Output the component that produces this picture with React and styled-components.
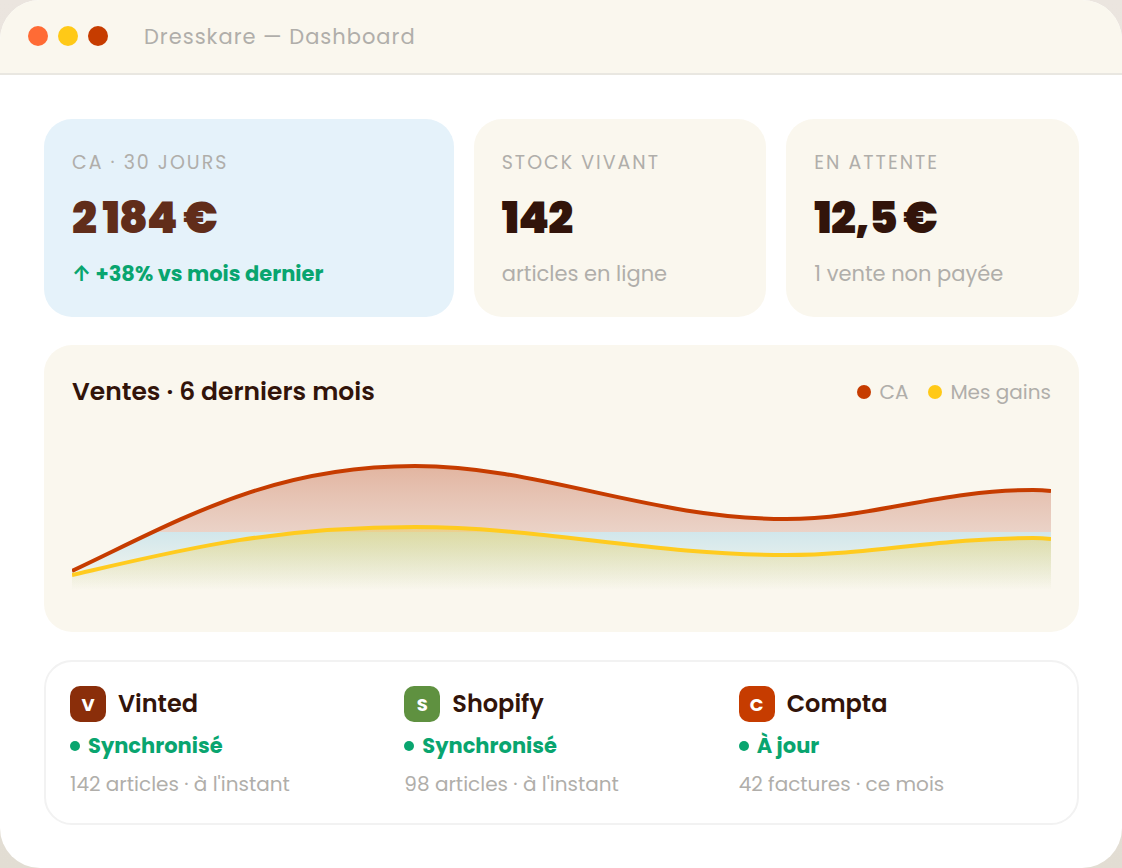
import React from 'react';
import styled, { createGlobalStyle } from 'styled-components';

const GlobalStyle = createGlobalStyle`
  * {
    box-sizing: border-box;
  }

  body {
    margin: 0;
    background: linear-gradient(#ebe5df, #e2ddd3);
    font-family: Poppins, Inter, 'Open Sans', sans-serif;
    color: #32140a;
  }

  h1, h2, h3, p, ul {
    margin: 0;
    padding: 0;
    font-weight: 400;
  }
`;

const Window = styled.div`
  min-height: 100vh;
  background-color: #fff;
  border-radius: 40px;
  overflow: hidden;
`;

const TitleBar = styled.header`
  display: flex;
  align-items: center;
  height: 75px;
  padding: 0 28px 2px;
  background-color: #faf7ee;
  border-bottom: 2px solid #e9e7e1;
`;

const Lights = styled.div`
  display: flex;
  gap: 10px;
  margin-right: 36px;
`;

const Dot = styled.span`
  flex: none;
  width: ${props => props.$size}px;
  height: ${props => props.$size}px;
  border-radius: 50%;
  background-color: ${props => props.$color};
`;

const WindowTitle = styled.h1`
  padding-top: 2px;
  color: #b0aeaa;
  font-size: 21px;
  line-height: 32px;
  letter-spacing: 1px;
`;

const Content = styled.main`
  display: flex;
  flex-direction: column;
  gap: 28px;
  padding: 44px 43px 42px 44px;
`;

const Stats = styled.section`
  display: grid;
  grid-template-columns: 1.4fr 1fr 1fr;
  gap: 20px;
`;

const StatCard = styled.div`
  padding: 29px 28px 27px;
  border-radius: 28px;
  background-color: ${props => (props.$accent ? '#e5f2fa' : '#faf7ee')};
`;

const StatLabel = styled.h2`
  color: #b0aeaa;
  font-size: 19px;
  line-height: 30px;
  letter-spacing: 2px;
  text-transform: uppercase;
`;

const StatValue = styled.p`
  margin: 14px 0;
  color: ${props => (props.$accent ? '#612d1a' : '#32140a')};
  font-size: 44px;
  font-weight: 900;
  line-height: 52px;
  letter-spacing: -1px;
  white-space: nowrap;
`;

const StatNote = styled.p`
  color: ${props => (props.$up ? '#09a56f' : '#b0aeaa')};
  font-size: 21px;
  font-weight: ${props => (props.$up ? 700 : 400)};
  line-height: 32px;
  white-space: nowrap;
`;

const ChartCard = styled.section`
  padding: 29px 28px 28px;
  border-radius: 28px;
  background-color: #faf7ee;
`;

const ChartHeader = styled.div`
  display: flex;
  align-items: center;
  justify-content: space-between;
  height: 36px;
  margin-bottom: 14px;
`;

const ChartTitle = styled.h2`
  font-size: 25px;
  font-weight: 600;
  line-height: 36px;
`;

const Legend = styled.ul`
  display: flex;
  gap: 20px;
  list-style: none;
`;

const LegendItem = styled.li`
  display: flex;
  align-items: center;
  gap: 8px;
  color: #b0aeaa;
  font-size: 20px;
  line-height: 30px;
`;

const Chart = styled.svg`
  display: block;
  width: 100%;
  height: 180px;
`;

const Channels = styled.section`
  display: grid;
  grid-template-columns: repeat(3, 1fr);
  gap: 20px;
  padding: 24px 24px 23px;
  border: 2px solid #f2f2f2;
  border-radius: 28px;
`;

const ChannelHead = styled.div`
  display: flex;
  align-items: center;
  gap: 12px;
`;

const Badge = styled.span`
  display: flex;
  align-items: center;
  justify-content: center;
  width: 36px;
  height: 36px;
  border-radius: 10px;
  background-color: ${props => props.$color};
  color: #fff;
  font-size: 18px;
  font-weight: 700;
`;

const ChannelName = styled.h3`
  font-size: 24px;
  font-weight: 600;
  line-height: 36px;
`;

const Status = styled.p`
  display: flex;
  align-items: center;
  gap: 8px;
  margin: 8px 0 6px;
  color: #09a56f;
  font-size: 21px;
  font-weight: 700;
  line-height: 32px;
`;

const Detail = styled.p`
  color: #b0aeaa;
  font-size: 20px;
  line-height: 32px;
`;

const stats = [
  { label: 'CA · 30 jours', value: '2\u00a0184\u00a0€', note: '↑ +38% vs mois dernier', accent: true },
  { label: 'Stock vivant', value: '142', note: 'articles en ligne' },
  { label: 'En attente', value: '12,5\u00a0€', note: '1 vente non payée' }
];

const channels = [
  { name: 'Vinted', color: '#8a2e0a', status: 'Synchronisé', detail: "142 articles · à l'instant" },
  { name: 'Shopify', color: '#5f9140', status: 'Synchronisé', detail: "98 articles · à l'instant" },
  { name: 'Compta', color: '#c63c00', status: 'À jour', detail: '42 factures · ce mois' }
];

const revenue = 'M0 147C108 96 198 42 343 42C468 42 578 95 714 95C798 95 868 66 961 66Q970 66 979 67';
const gains = 'M0 151C108 126 198 103 343 103C468 103 578 131 714 131C798 131 868 114 961 114Q970 114 979 115';

const SalesChart = () => (
  <Chart viewBox="0 0 979 180" preserveAspectRatio="none" role="img" aria-label="Ventes">
    <defs>
      <linearGradient id="revenueFill" gradientUnits="userSpaceOnUse" x1="0" y1="42" x2="0" y2="166">
        <stop offset="0" stopColor="#b43408" stopOpacity="0.34" />
        <stop offset="0.53" stopColor="#b4503c" stopOpacity="0.22" />
        <stop offset="0.53" stopColor="#98d0e8" stopOpacity="0.42" />
        <stop offset="1" stopColor="#98d0e8" stopOpacity="0" />
      </linearGradient>
      <linearGradient id="gainsFill" gradientUnits="userSpaceOnUse" x1="0" y1="103" x2="0" y2="166">
        <stop offset="0" stopColor="#ecce50" stopOpacity="0.5" />
        <stop offset="1" stopColor="#ecce50" stopOpacity="0" />
      </linearGradient>
    </defs>
    <path d={`${revenue}V166H0Z`} fill="url(#revenueFill)" />
    <path d={`${gains}V166H0Z`} fill="url(#gainsFill)" />
    <path d={revenue} fill="none" stroke="#c63c00" strokeWidth="4" />
    <path d={gains} fill="none" stroke="#ffcb1f" strokeWidth="4" />
  </Chart>
);

const App = () => (
  <>
    <GlobalStyle />
    <Window>
      <TitleBar>
        <Lights>
          <Dot $size={20} $color="#ff6b35" />
          <Dot $size={20} $color="#ffc917" />
          <Dot $size={20} $color="#c63c00" />
        </Lights>
        <WindowTitle>Dresskare — Dashboard</WindowTitle>
      </TitleBar>
      <Content>
        <Stats>
          {stats.map(stat => (
            <StatCard key={stat.label} $accent={stat.accent}>
              <StatLabel>{stat.label}</StatLabel>
              <StatValue $accent={stat.accent}>{stat.value}</StatValue>
              <StatNote $up={stat.accent}>{stat.note}</StatNote>
            </StatCard>
          ))}
        </Stats>
        <ChartCard>
          <ChartHeader>
            <ChartTitle>Ventes · 6 derniers mois</ChartTitle>
            <Legend>
              <LegendItem>
                <Dot $size={14} $color="#c63c00" />
                CA
              </LegendItem>
              <LegendItem>
                <Dot $size={14} $color="#ffc917" />
                Mes gains
              </LegendItem>
            </Legend>
          </ChartHeader>
          <SalesChart />
        </ChartCard>
        <Channels>
          {channels.map(channel => (
            <div key={channel.name}>
              <ChannelHead>
                <Badge $color={channel.color}>{channel.name[0]}</Badge>
                <ChannelName>{channel.name}</ChannelName>
              </ChannelHead>
              <Status>
                <Dot $size={10} $color="#09a56f" />
                {channel.status}
              </Status>
              <Detail>{channel.detail}</Detail>
            </div>
          ))}
        </Channels>
      </Content>
    </Window>
  </>
);

export default App;
